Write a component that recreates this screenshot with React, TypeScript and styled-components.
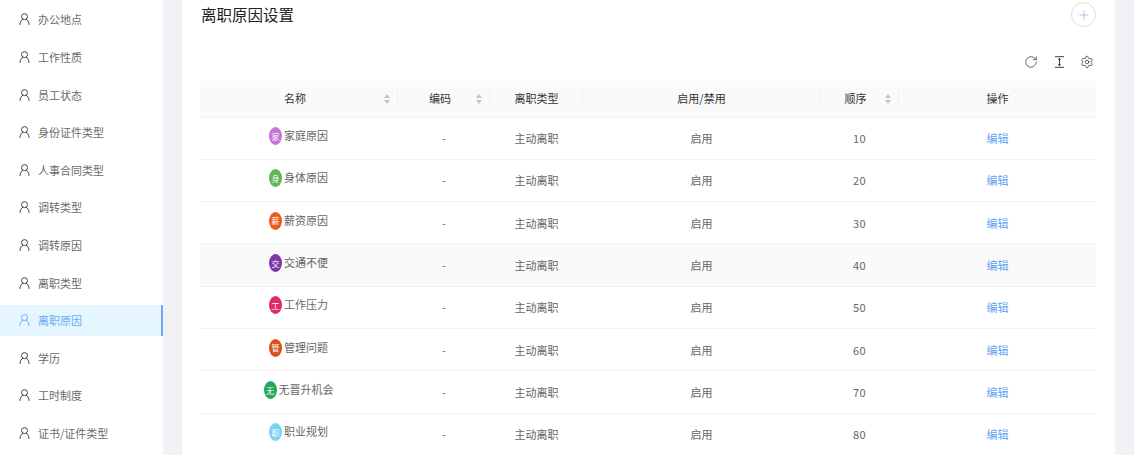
import styled, { createGlobalStyle } from "styled-components";
import { Plus, RotateCw, Settings } from "lucide-react";

const GlobalStyle = createGlobalStyle`
  html, body {
    margin: 0;
    padding: 0;
    height: 455px;
    overflow: hidden;
    background: #f0f2f5;
    font-family: "Noto Sans CJK SC", "Liberation Sans", sans-serif;
  }
`;

const Layout = styled.div`
  display: flex;
  height: 455px;
  overflow: hidden;
`;

const Sidebar = styled.ul`
  flex: 0 0 163px;
  margin: 0;
  padding: 3.9px 0 0;
  list-style: none;
  background: #fff;
`;

const MenuItem = styled.li<{ $active?: boolean }>`
  display: flex;
  align-items: center;
  gap: 8px;
  box-sizing: border-box;
  height: 31px;
  margin-bottom: 6.6px;
  padding-left: 19px;
  font-size: 11px;
  color: ${(p) => (p.$active ? "#6aaaf7" : "#6b6b6b")};
  background: ${(p) => (p.$active ? "#e6f6ff" : "transparent")};
  border-right: 2px solid ${(p) => (p.$active ? "#6aaaf7" : "transparent")};

  svg {
    color: ${(p) => (p.$active ? "#6aaaf7" : "#444")};
  }
`;

const Main = styled.main`
  flex: 1;
  padding: 0 19px;
  min-width: 0;
`;

const Card = styled.section`
  background: #fff;
  height: 455px;
  padding: 0 19px 0 18px;
  box-sizing: border-box;
`;

const CardHeader = styled.header`
  display: flex;
  align-items: center;
  justify-content: space-between;
  height: 29px;
  padding-left: 1px;
`;

const Title = styled.h2`
  margin: 0 0 2px;
  font-size: 15.5px;
  font-weight: 400;
  color: #222;
`;

const AddButton = styled.button`
  display: flex;
  align-items: center;
  justify-content: center;
  width: 25px;
  height: 25px;
  padding: 0;
  color: #7fa9e0;
  background: #fff;
  border: 1px solid #dedede;
  border-radius: 50%;
`;

const Toolbar = styled.div`
  display: flex;
  align-items: center;
  justify-content: flex-end;
  gap: 14px;
  box-sizing: border-box;
  height: 52px;
  padding: 14px 2px 0 0;
  color: #2b2b2b;
`;

const ToolIcon = styled.span`
  display: flex;
  align-items: center;
  justify-content: center;
  width: 14px;
  height: 14px;
`;

const Table = styled.table`
  width: 896px;
  border-collapse: collapse;
  table-layout: fixed;
  font-size: 11px;
  color: #666;
`;

const HeadCell = styled.th<{ $divider?: boolean; $sort?: boolean }>`
  position: relative;
  height: 36px;
  padding: 0 ${(p) => (p.$sort ? "8px" : "0")} 2px 0;
  font-weight: 400;
  color: #333;
  text-align: center;
  background: #fafafa;
  border-bottom: 1px solid #f2f2f2;
  box-sizing: border-box;

  &::after {
    content: "";
    display: ${(p) => (p.$divider ? "block" : "none")};
    position: absolute;
    top: 9px;
    right: 0;
    width: 1px;
    height: 17px;
    background: #f0f0f0;
  }
`;

const Sorter = styled.span`
  position: absolute;
  top: 13px;
  right: 8px;
  display: flex;
  flex-direction: column;
  gap: 2px;

  i {
    display: block;
    width: 0;
    height: 0;
    border-left: 3.5px solid transparent;
    border-right: 3.5px solid transparent;
  }
  i:first-child {
    border-bottom: 4px solid #c4c4c4;
  }
  i:last-child {
    border-top: 4px solid #c4c4c4;
  }
`;

const Row = styled.tr<{ $hover?: boolean }>`
  background: ${(p) => (p.$hover ? "#fafafa" : "#fff")};
`;

const Cell = styled.td`
  height: 42.33px;
  padding: 0;
  box-sizing: border-box;
  text-align: center;
  border-bottom: 1px solid #f2f2f2;
`;

const NumberText = styled.span`
  letter-spacing: 0.5px;
`;

const NameWrap = styled.div`
  display: flex;
  align-items: center;
  justify-content: center;
  gap: 2px;
  margin-top: -4px;
  padding-right: 1px;
`;

const NameText = styled.span`
  margin-bottom: 2px;
`;

const Avatar = styled.span<{ $color: string }>`
  display: flex;
  align-items: center;
  justify-content: center;
  width: 13px;
  height: 18px;
  font-size: 8px;
  color: #fff;
  background: ${(p) => p.$color};
  border-radius: 50%;
  overflow: hidden;
  white-space: nowrap;
`;

const EditLink = styled.a`
  color: #629ff5;
`;

const UserIcon = () => (
  <svg width="11" height="12" viewBox="0 0 11 12" fill="none" stroke="currentColor" strokeWidth="1">
    <circle cx="5.5" cy="3.6" r="3" />
    <path d="M1 11.5c0-2.6 1.3-4.6 2.7-5.2M10 11.5c0-2.6-1.3-4.6-2.7-5.2" strokeLinecap="round" />
  </svg>
);

const ColumnHeightIcon = () => (
  <svg width="11" height="12" viewBox="0 0 11 12" fill="none" stroke="currentColor" strokeWidth="1">
    <path d="M1 .7h9M1 11.3h9M5.5 2.2v7.6" strokeWidth="0.9" />
    <path d="M4.2 3.6 5.5 2.3l1.3 1.3zM4.2 8.4 5.5 9.7l1.3-1.3z" fill="currentColor" strokeWidth="0.4" />
  </svg>
);

const menus = [
  "办公地点",
  "工作性质",
  "员工状态",
  "身份证件类型",
  "人事合同类型",
  "调转类型",
  "调转原因",
  "离职类型",
  "离职原因",
  "学历",
  "工时制度",
  "证书/证件类型",
];

const columns = [
  { title: "名称", width: 198, sort: true, divider: true },
  { title: "编码", width: 92, sort: true, divider: true },
  { title: "离职类型", width: 93, divider: true },
  { title: "启用/禁用", width: 237, divider: true },
  { title: "顺序", width: 79, sort: true, divider: true },
  { title: "操作", width: 197 },
];

const rows = [
  { name: "家庭原因", color: "#c774d8", order: 10 },
  { name: "身体原因", color: "#62b558", order: 20 },
  { name: "薪资原因", color: "#f0591e", order: 30 },
  { name: "交通不便", color: "#7f35a8", order: 40, hover: true },
  { name: "工作压力", color: "#e32a64", order: 50 },
  { name: "管理问题", color: "#d94f16", order: 60 },
  { name: "无晋升机会", color: "#23a95c", order: 70 },
  { name: "职业规划", color: "#78d4f2", order: 80 },
];

export default function App() {
  return (
    <>
      <GlobalStyle />
      <Layout>
        <Sidebar>
          {menus.map((m) => (
            <MenuItem key={m} $active={m === "离职原因"}>
              <UserIcon />
              {m}
            </MenuItem>
          ))}
        </Sidebar>
        <Main>
          <Card>
            <CardHeader>
              <Title>离职原因设置</Title>
              <AddButton aria-label="add">
                <Plus size={14} strokeWidth={1.1} />
              </AddButton>
            </CardHeader>
            <Toolbar>
              <ToolIcon>
                <RotateCw size={14} strokeWidth={1.2} />
              </ToolIcon>
              <ToolIcon>
                <ColumnHeightIcon />
              </ToolIcon>
              <ToolIcon>
                <Settings size={14} strokeWidth={1.2} />
              </ToolIcon>
            </Toolbar>
            <Table>
              <colgroup>
                {columns.map((c) => (
                  <col key={c.title} width={c.width} />
                ))}
              </colgroup>
              <thead>
                <tr>
                  {columns.map((c) => (
                    <HeadCell key={c.title} $divider={c.divider} $sort={c.sort}>
                      {c.title}
                      {c.sort && (
                        <Sorter>
                          <i />
                          <i />
                        </Sorter>
                      )}
                    </HeadCell>
                  ))}
                </tr>
              </thead>
              <tbody>
                {rows.map((r) => (
                  <Row key={r.name} $hover={r.hover}>
                    <Cell>
                      <NameWrap>
                        <Avatar $color={r.color}>{r.name[0]}</Avatar>
                        <NameText>{r.name}</NameText>
                      </NameWrap>
                    </Cell>
                    <Cell>-</Cell>
                    <Cell>主动离职</Cell>
                    <Cell>启用</Cell>
                    <Cell>
                      <NumberText>{r.order}</NumberText>
                    </Cell>
                    <Cell>
                      <EditLink>编辑</EditLink>
                    </Cell>
                  </Row>
                ))}
              </tbody>
            </Table>
          </Card>
        </Main>
      </Layout>
    </>
  );
}
